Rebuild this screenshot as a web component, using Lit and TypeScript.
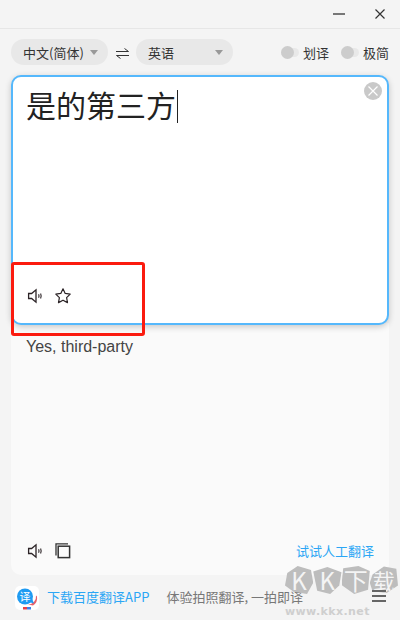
import { LitElement, html, css } from "lit";
import { customElement } from "lit/decorators.js";

const speaker = html`<svg class="ic" width="18" height="18" viewBox="0 0 18 18" fill="none" stroke="#2b2326" stroke-width="1.3"><path d="M2.6 6.5h3L10 2.8v12.4L5.6 11.5h-3z"/><path d="M12.6 7.2q.9 1.8 0 3.6M14.6 6.6q1.1 2.4 0 4.8" stroke-width="1.1"/></svg>`;
const star = html`<svg class="ic" width="18" height="18" viewBox="0 0 18 18" fill="none" stroke="#2b2326" stroke-width="1.2" stroke-linejoin="round"><path d="M9 1.8l2.2 4.6 5 .7-3.6 3.5.9 5L9 13.2l-4.5 2.4.9-5L1.8 7.1l5-.7z"/></svg>`;
const copy = html`<svg class="ic" width="18" height="18" viewBox="0 0 18 18" fill="none" stroke="#333" stroke-width="1.3"><path d="M2 13.5V1.9h12"/><rect x="4.2" y="4.2" width="11.4" height="11.4" stroke-width="1.5"/></svg>`;

@customElement("app-root")
export class AppRoot extends LitElement {
  static styles = css`
    :host { display: block; width: 400px; height: 620px; background: #f4f4f4; font-family: "Noto Sans CJK SC", "Liberation Sans", sans-serif; overflow: hidden; position: relative; color: #333; }
    * { box-sizing: border-box; }
    .title { height: 29px; border-bottom: 1px solid #e6e6e6; display: flex; justify-content: flex-end; align-items: center; gap: 30px; padding: 0 15px 0 0; }
    .min { width: 12px; height: 2px; background: #777; }
    .toolbar { height: 46px; padding: 10px 11px 0 11px; display: flex; align-items: flex-start; }
    .pill { height: 26px; border-radius: 13px; background: #e8e8e8; display: flex; align-items: center; font-size: 13px; color: #333; position: relative; }
    .pill.a { width: 97px; padding-left: 12px; gap: 6px; }
    .pill.b { width: 97px; padding-left: 12px; justify-content: space-between; padding-right: 10px; }
    .tri { width: 0; height: 0; border-left: 4px solid transparent; border-right: 4px solid transparent; border-top: 5px solid #999; }
    .swap { width: 28px; height: 26px; display: flex; align-items: center; justify-content: center; padding-top: 2px; }
    .toggles { margin-left: auto; display: flex; gap: 12px; height: 26px; align-items: center; }
    .tg { display: flex; align-items: center; gap: 4px; font-size: 13px; color: #333; }
    .sw { width: 18px; height: 9px; border-radius: 5px; background: #e8e8e8; position: relative; display: block; }
    .sw i { position: absolute; left: 0; top: -2px; width: 13px; height: 13px; border-radius: 50%; background: #ccc; }
    .input { margin: 0 11px; height: 250px; background: #fff; border: 2px solid #55b8fc; border-radius: 10px; box-shadow: 0 2px 6px rgba(0,0,0,.2); position: relative; display: flex; flex-direction: column; justify-content: space-between; padding: 5px 13px 18px 13px; z-index: 1; }
    .src { font-size: 30px; line-height: 44px; color: #222; display: flex; align-items: center; }
    .src span:first-child { padding-bottom: 4px; }
    .caret { display: inline-block; width: 1px; height: 33px; background: #222; margin-left: 1px; }
    .clear { position: absolute; right: 5px; top: 5px; width: 18px; height: 18px; border-radius: 50%; background: #c9c9c9; display: flex; align-items: center; justify-content: center; }
    .icons { display: flex; gap: 10px; align-items: center; height: 18px; }
    .output { margin: -2px 11px 0; height: 252px; background: #fafafa; border-radius: 0 0 10px 10px; padding: 15px; display: flex; flex-direction: column; justify-content: space-between; }
    .res { font-family: "Liberation Sans", sans-serif; font-size: 16px; line-height: 18px; color: #444; }
    .outfoot { display: flex; align-items: center; justify-content: space-between; }
    .link { color: #2ba6f5; font-size: 13px; }
    .foot { height: 45px; display: flex; align-items: center; padding: 0 14px 3px 15px; font-size: 13px; position: relative; }
    .logo { width: 24px; height: 24px; margin: 4px 8px 0 0; display: block; }
    .dl { color: #2ba6f5; margin-right: 17px; }
    .hint { color: #777; }
    .menu { margin-left: auto; width: 14px; display: flex; flex-direction: column; gap: 3px; position: relative; z-index: 3; }
    .menu i { display: block; height: 2px; background: #666; }
    .red { position: absolute; left: 11px; top: 262px; width: 134px; height: 74px; border: 3px solid #fb1b0f; border-radius: 3px; z-index: 3; }
    .wm { position: absolute; left: 285px; top: 566px; width: 113px; z-index: 2; pointer-events: none; }
    .stones { display: flex; height: 30px; }
    .st { flex: 1; height: 28px; background: #bdbdbd; display: flex; align-items: center; justify-content: center; color: #f4f4f4; font-weight: 400; font-size: 24px; line-height: 28px; }
    .st.k1 { clip-path: polygon(8% 25%, 45% 0, 92% 14%, 100% 60%, 78% 100%, 30% 92%, 0 70%); }
    .st.k2 { clip-path: polygon(0 20%, 50% 4%, 100% 22%, 92% 70%, 60% 100%, 14% 88%); }
    .st.x { clip-path: polygon(6% 8%, 60% 0, 100% 18%, 94% 85%, 45% 100%, 0 68%); }
    .st.z { clip-path: polygon(10% 30%, 50% 2%, 94% 10%, 100% 70%, 60% 96%, 10% 90%, 0 60%); font-size: 22px; }
    .url { font-family: "DejaVu Sans", sans-serif; font-size: 11px; line-height: 13px; font-weight: 700; letter-spacing: .4px; color: #cfcfcf; margin-top: 9px; white-space: nowrap; }
  `;

  render() {
    return html`
      <div class="title">
        <span class="min"></span>
        <svg width="10" height="10" viewBox="0 0 10 10" stroke="#333" stroke-width="1.2"><path d="M.5.5l9 9M9.5.5l-9 9"/></svg>
      </div>
      <div class="toolbar">
        <div class="pill a">中文(简体)<span class="tri"></span></div>
        <div class="swap">
          <svg width="13" height="11" viewBox="0 0 13 11" fill="none" stroke="#333" stroke-width="1"><path d="M0 3.5h12.5M8.5.5l4 3M13 7.5H.5M4.5 10.5l-4-3"/></svg>
        </div>
        <div class="pill b">英语<span class="tri"></span></div>
        <div class="toggles">
          <div class="tg"><span class="sw"><i></i></span>划译</div>
          <div class="tg"><span class="sw"><i></i></span>极简</div>
        </div>
      </div>
      <div class="input">
        <div class="src"><span>是的第三方</span><span class="caret"></span></div>
        <div class="clear"><svg width="10" height="10" viewBox="0 0 10 10" stroke="#fff" stroke-width="1.2"><path d="M.5.5l9 9M9.5.5l-9 9"/></svg></div>
        <div class="icons">${speaker}${star}</div>
      </div>
      <div class="output">
        <div class="res">Yes, third-party</div>
        <div class="outfoot">
          <div class="icons">${speaker}${copy}</div>
          <span class="link">试试人工翻译</span>
        </div>
      </div>
      <div class="foot">
        <svg class="logo" viewBox="0 0 24 24">
          <rect width="24" height="24" rx="5" fill="#fff"/>
          <path d="M13 18.5a8 8 0 0 0 8-9l1 1a9 9 0 0 1-4 9z" fill="#e8606a"/>
          <circle cx="10" cy="10.5" r="8" fill="#1f9bf2"/>
          <path d="M14 16l5 1.5-2-5z" fill="#1f9bf2"/>
          <rect x="8" y="21" width="4" height="2.5" fill="#e8404a"/>
          <rect x="12" y="21" width="4" height="2.5" fill="#3f7fe8"/>
          <text x="10" y="14.5" font-size="11" fill="#fff" text-anchor="middle" font-family="Noto Sans CJK SC">译</text>
        </svg>
        <span class="dl">下载百度翻译APP</span>
        <span class="hint">体验拍照翻译, 一拍即译</span>
        <span class="menu"><i></i><i></i><i></i></span>
      </div>
      <div class="red"></div>
      <div class="wm">
        <div class="stones"><span class="st k1">K</span><span class="st k2">K</span><span class="st x">下</span><span class="st z">载</span></div>
        <div class="url">www.kkx.net</div>
      </div>
    `;
  }
}
